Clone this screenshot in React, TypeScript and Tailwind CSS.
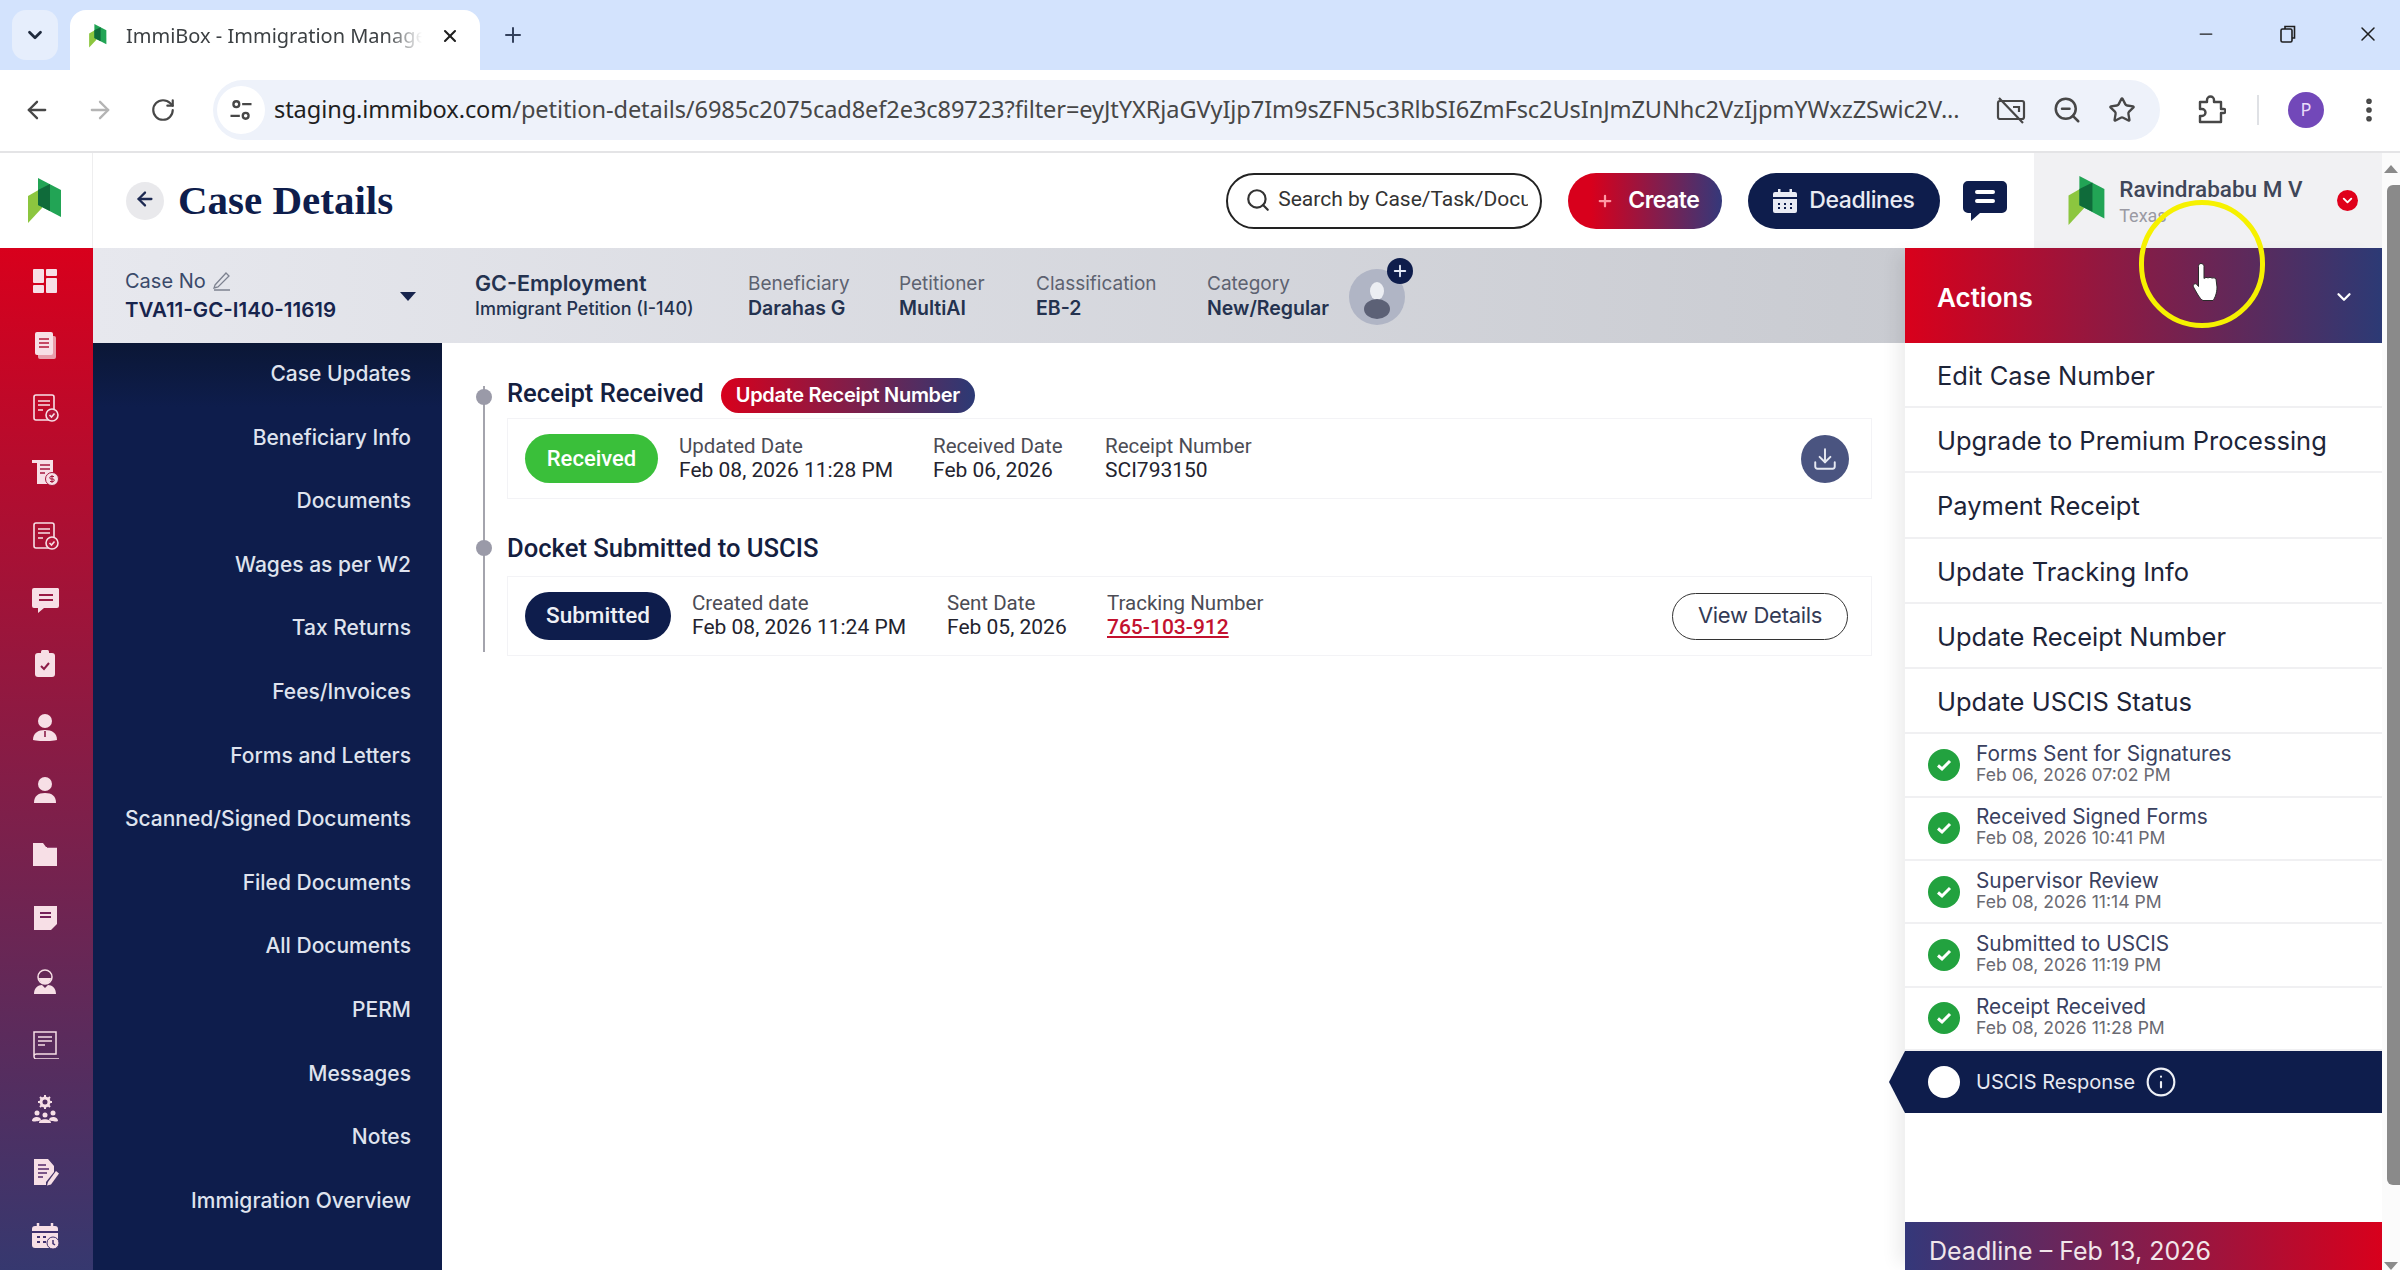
import { ArrowLeft, ArrowRight, ChevronDown, Download, Info, Minus, MoreVertical, Plus, RotateCw, Search, Star, X, ZoomOut } from 'lucide-react';

const navItems = [
    'Case Updates',
    'Beneficiary Info',
    'Documents',
    'Wages as per W2',
    'Tax Returns',
    'Fees/Invoices',
    'Forms and Letters',
    'Scanned/Signed Documents',
    'Filed Documents',
    'All Documents',
    'PERM',
    'Messages',
    'Notes',
    'Immigration Overview',
];

const actions = [
    'Edit Case Number',
    'Upgrade to Premium Processing',
    'Payment Receipt',
    'Update Tracking Info',
    'Update Receipt Number',
    'Update USCIS Status',
];

const steps = [
    { title: 'Forms Sent for Signatures', date: 'Feb 06, 2026 07:02 PM' },
    { title: 'Received Signed Forms', date: 'Feb 08, 2026 10:41 PM' },
    { title: 'Supervisor Review', date: 'Feb 08, 2026 11:14 PM' },
    { title: 'Submitted to USCIS', date: 'Feb 08, 2026 11:19 PM' },
    { title: 'Receipt Received', date: 'Feb 08, 2026 11:28 PM' },
];

function Logo({ className }: { className?: string }) {
    return (
        <svg viewBox="0 0 34 46" className={className}>
            <polygon points="0,18 14,10 14,30 0,45" fill="#8cc63f" />
            <polygon points="10,0 33,12 33,39 10,27" fill="#22a455" />
            <polygon points="10,12 22,6 22,33 10,27" fill="#0f6b3a" />
        </svg>
    );
}

const check = <><circle cx="21" cy="21" r="6" fill="#b5173a" stroke="currentColor" strokeWidth="1.6" /><path d="M18.5 21l2 2 3-3.5" fill="none" stroke="currentColor" strokeWidth="1.6" /></>;

const sideIcons = [
    <><rect x="2" y="2" width="11" height="14" rx="1" /><rect x="15" y="2" width="11" height="7" rx="1" /><rect x="2" y="18" width="11" height="8" rx="1" /><rect x="15" y="11" width="11" height="15" rx="1" /></>,
    <><rect x="7" y="5" width="18" height="23" rx="2" opacity=".7" /><rect x="4" y="1" width="18" height="23" rx="2" /><path d="M8 8h10M8 12h10M8 16h10" stroke="#b5173a" strokeWidth="1.6" /></>,
    <><rect x="3" y="1" width="20" height="25" rx="2" fill="none" stroke="currentColor" strokeWidth="1.6" /><path d="M7 7h12M7 11h12M7 16h5" stroke="currentColor" strokeWidth="1.6" />{check}</>,
    <><path d="M1 2h21v14l-2 10H6V5H1z" /><path d="M9 7h10M9 11h10M9 15h5" stroke="#a5183f" strokeWidth="1.6" /><circle cx="21" cy="21" r="6.5" stroke="#a5183f" strokeWidth="1" /><path d="M21 17v8M23 18.5h-3a1.2 1.2 0 000 2.5h2a1.2 1.2 0 010 2.500h-3" fill="none" stroke="#a5183f" strokeWidth="1" /></>,
    <><rect x="3" y="1" width="20" height="25" rx="2" fill="none" stroke="currentColor" strokeWidth="1.6" /><path d="M7 7h12M7 11h12M7 16h5" stroke="currentColor" strokeWidth="1.6" />{check}</>,
    <><path d="M3 3h24a2 2 0 011 1v17a2 2 0 01-2 2H13l-6 5v-5H3a2 2 0 01-2-2V5a2 2 0 012-2z" /><path d="M8 10h14M8 15h14" stroke="#9a1a44" strokeWidth="2" /></>,
    <><rect x="4" y="4" width="20" height="24" rx="3" /><rect x="10" y="1" width="8" height="5" rx="1.500" /><path d="M10 17l3 3 5-6" fill="none" stroke="#8c1c48" strokeWidth="2" /></>,
    <><circle cx="14" cy="8" r="7" /><path d="M2 27c0-7 5-10 12-10s12 3 12 10c-4 1.500-20 1.500-24 0z" /><path d="M14 18v6" stroke="#8a1d49" strokeWidth="1.600" /></>,
    <><circle cx="14" cy="8" r="7" /><path d="M3 27c0-7 4-10 11-10s11 3 11 10z" /></>,
    <><path d="M2 3h10l3 4h11v19H2z" /><path d="M16 7h10" stroke="#7e2052" strokeWidth="1.500" /></>,
    <><path d="M3 2h23v18l-6 6H3z" /><path d="M9 9h11M9 13h11" stroke="#75215a" strokeWidth="2" /></>,
    <><circle cx="14" cy="10" r="7" fill="none" stroke="currentColor" strokeWidth="1.500" /><path d="M8 11a6 6 0 0012 0z" /><path d="M3 27c0-6 4-9 8-9l3 3 3-3c4 0 8 3 8 9z" /></>,
    <><path d="M3 25V1h22v22H6a2.500 2.500 0 00-3 2.500 2.500 2.500 0 003 2.500h22" fill="none" stroke="currentColor" strokeWidth="1.500" /><path d="M7 6h14M7 10h14M7 14h7" stroke="currentColor" strokeWidth="1.500" /></>,
    <><circle cx="14" cy="7" r="4" fill="none" stroke="currentColor" strokeWidth="3" /><path d="M14 0v3M14 11v3M7 7h3M18 7h3M9 2l2 2M19 2l-2 2M9 12l2-2M19 12l-2-2" stroke="currentColor" strokeWidth="2" /><circle cx="6" cy="18" r="2.500" /><circle cx="22" cy="18" r="2.500" /><circle cx="14" cy="20" r="2.500" /><path d="M1 26c0-5 9-5 9-1-.5 1-8 2-9 1zM18 25c0-4 9-4 9 1-1 1-8 0-9-1zM8 28c0-5 12-5 12 0z" /></>,
    <><path d="M3 1h14l6 7v6l-8 10v3H3z" /><path d="M7 7h8M7 11h11M7 15h9M7 19h5" stroke="#54296a" strokeWidth="1.500" /><path d="M17 24l8-11 3 2.500-8 11-4 1z" /></>,
    <><rect x="1" y="4" width="26" height="22" rx="3" /><path d="M7 1v5M21 1v5" stroke="currentColor" strokeWidth="2.500" /><path d="M1 10h26M6 15h3M12 15h3M6 20h3M12 20h3" stroke="#41316f" strokeWidth="1.800" /><circle cx="22" cy="21" r="6" stroke="#41316f" strokeWidth="1" /><path d="M22 18v3.500l2 1.500" fill="none" stroke="#41316f" strokeWidth="1.500" /></>,
];

function TabStrip() {
    return (
        <div className="flex h-[70px] shrink-0 items-end bg-[#d3e3fd] font-['Noto_Sans',sans-serif]">
            <div className="mb-[10px] ml-[12px] flex h-[50px] w-[46px] items-center justify-center rounded-[14px] bg-[#e6eefc]">
                <ChevronDown size={22} strokeWidth={3} className="text-[#1f2a3d]" />
            </div>
            <div className="ml-[12px] flex h-[60px] w-[410px] items-center rounded-t-[16px] bg-white pb-[8px] pl-[18px]">
                <Logo className="h-[24px] w-[20px] shrink-0" />
                <span className="ml-[18px] w-[296px] overflow-hidden whitespace-nowrap text-[20px] text-[#3c4043] [mask-image:linear-gradient(90deg,#000_88%,transparent)]">ImmiBox - Immigration Manage</span>
                <X size={20} strokeWidth={2.5} className="ml-[18px] text-[#1f1f1f]" />
            </div>
            <Plus size={24} strokeWidth={2} className="mb-[23px] ml-[21px] text-[#33415c]" />
            <div className="mb-[24px] ml-auto flex items-center text-[#1f1f1f]">
                <Minus size={20} strokeWidth={1.5} />
                <svg viewBox="0 0 20 20" className="ml-[62px] h-[20px] w-[20px]" fill="none" stroke="currentColor" strokeWidth="1.6">
                    <rect x="3" y="5" width="11" height="13" rx="1.500" />
                    <path d="M7 5V2.500h9.500V14H14" />
                </svg>
                <X size={24} strokeWidth={1.5} className="ml-[58px] mr-[20px]" />
            </div>
        </div>
    );
}

function Toolbar() {
    return (
        <div className="flex h-[83px] shrink-0 items-center border-b-2 border-[#e4e4e6] bg-white pb-[2px] font-['Noto_Sans',sans-serif]">
            <ArrowLeft size={28} strokeWidth={2} className="ml-[23px] text-[#474747]" />
            <ArrowRight size={28} strokeWidth={2} className="ml-[35px] text-[#b4b4b4]" />
            <RotateCw size={26} strokeWidth={2} className="ml-[36px] text-[#474747]" />
            <div className="ml-[37px] flex h-[60px] w-[1947px] items-center rounded-full bg-[#eef2fa]">
                <div className="ml-[4px] flex h-[48px] w-[48px] shrink-0 items-center justify-center rounded-full bg-white">
                    <svg viewBox="0 0 24 24" className="h-[28px] w-[28px]" fill="none" stroke="#474747" strokeWidth="2">
                        <circle cx="8" cy="7" r="2.500" />
                        <path d="M13 7h8M3 17h8" />
                        <circle cx="16" cy="17" r="2.500" />
                    </svg>
                </div>
                <span className="ml-[9px] w-[1688px] overflow-hidden whitespace-nowrap text-[23.600px] tracking-[-0.1px] text-[#474747]">
                    <span className="text-[#1f1f1f]">staging.immibox.com</span>/petition-details/6985c2075cad8ef2e3c89723?filter=eyJtYXRjaGVyIjp7Im9sZFN5c3RlbSI6ZmFsc2UsInJmZUNhc2VzIjpmYWxzZSwic2V...
                </span>
                <svg viewBox="0 0 30 30" className="ml-[34px] h-[30px] w-[30px] shrink-0" fill="none" stroke="#474747" strokeWidth="2.200">
                    <rect x="2" y="6" width="26" height="18" rx="2" />
                    <path d="M3 3l24 25M17 12h6v5" />
                </svg>
                <ZoomOut size={30} strokeWidth={2} className="ml-[26px] shrink-0 text-[#474747]" />
                <Star size={28} strokeWidth={2} className="ml-[26px] shrink-0 text-[#474747]" />
            </div>
            <svg viewBox="0 0 30 30" className="ml-[36px] h-[30px] w-[30px]" fill="none" stroke="#474747" strokeWidth="2.400" strokeLinejoin="round">
                <path d="M4 7h7V5a3.500 3.500 0 017 0v2h7v7h2.500a1.500 1.500 0 010 4H25v9H4v-6h2a3.500 3.500 0 000-7H4z" />
            </svg>
            <div className="ml-[31px] h-[30px] w-[2px] bg-[#dfe1e5]" />
            <div className="ml-[29px] flex h-[36px] w-[36px] items-center justify-center rounded-full bg-[#7248b9] text-[18px] text-[#e8dcfa]">P</div>
            <MoreVertical size={30} strokeWidth={2.5} className="ml-[30px] text-[#474747]" />
        </div>
    );
}

function AppHeader() {
    return (
        <div className="flex h-[95px] shrink-0 items-center pl-[33px]">
            <div className="flex h-[38px] w-[38px] items-center justify-center rounded-full bg-[#e9e9ec] pb-[3px]">
                <ArrowLeft size={22} strokeWidth={2.5} className="text-[#1d2a52]" />
            </div>
            <h1 className="ml-[14px] whitespace-nowrap pt-[1px] font-['Liberation_Serif',serif] text-[41px] font-bold text-[#0e1d4c]">Case Details</h1>
            <div className="ml-[833px] flex h-[56px] w-[316px] shrink-0 items-center rounded-full border-2 border-[#222] pl-[17px] pb-[2px]">
                <Search size={26} strokeWidth={2} className="shrink-0 text-[#333]" />
                <span className="ml-[7px] w-[250px] overflow-hidden whitespace-nowrap font-['Roboto',sans-serif] text-[21px] text-[#333]">Search by Case/Task/Document</span>
            </div>
            <div className="ml-[26px] flex h-[56px] w-[154px] shrink-0 items-center rounded-full bg-[linear-gradient(90deg,#d8001c_15%,#34387a)] pl-[28px] text-white">
                <Plus size={18} strokeWidth={3} className="text-[#ff9aa5]" />
                <span className="ml-[14px] font-['Inter',sans-serif] text-[23px] font-semibold tracking-[-0.5px]">Create</span>
            </div>
            <div className="ml-[26px] flex h-[56px] w-[192px] shrink-0 items-center rounded-full bg-[#0e1d4c] pl-[24px] text-[#e9ebf3]">
                <svg viewBox="0 0 26 26" className="h-[26px] w-[26px] shrink-0" fill="currentColor">
                    <path d="M6 1h2.500v3h9V1H20v3h3a2 2 0 012 2v3H1V6a2 2 0 012-2h3z" />
                    <path d="M1 11h24v12a2 2 0 01-2 2H3a2 2 0 01-2-2z" />
                    <path d="M6 15h2v2H6zM12 15h2v2h-2zM18 15h2v2h-2zM6 19h2v2H6zM12 19h2v2h-2zM18 19h2v2h-2z" fill="#0e1d4c" />
                </svg>
                <span className="ml-[11px] font-['Inter',sans-serif] text-[23px] font-medium tracking-[-0.4px]">Deadlines</span>
            </div>
            <svg viewBox="0 0 44 40" className="ml-[23px] h-[40px] w-[44px] shrink-0">
                <path d="M5 0h34a5 5 0 015 5v22a5 5 0 01-5 5H17l-9 8v-8H5a5 5 0 01-5-5V5a5 5 0 015-5z" fill="#0e1d4c" />
                <path d="M14 11h16M14 20h16" stroke="#fff" strokeWidth="4" strokeLinecap="round" />
            </svg>
            <div className="ml-[27px] flex h-full flex-1 items-center bg-[#f1f1f3] pl-[33px]">
                <Logo className="h-[50px] w-[40px] shrink-0" />
                <div className="ml-[12px] flex flex-col pt-[2px] font-['Roboto',sans-serif]">
                    <span className="whitespace-nowrap text-[22.500px] font-medium leading-[26px] text-[#3f4658]">Ravindrababu M V</span>
                    <span className="mt-[3px] text-[18px] leading-[22px] text-[#9a9aa3]">Texas</span>
                </div>
                <div className="ml-[35px] flex h-[21px] w-[21px] shrink-0 items-center justify-center rounded-full bg-[#e0001b]">
                    <ChevronDown size={15} strokeWidth={3} className="text-white" />
                </div>
            </div>
        </div>
    );
}

function CaseBar() {
    return (
        <div className="flex h-[95px] shrink-0 items-center bg-[linear-gradient(90deg,#e7e8ee,#c9cbd1)] font-['Inter',sans-serif]">
            <div className="ml-[32px] flex w-[325px] shrink-0 items-center">
                <div className="w-[275px]">
                    <div className="flex items-center gap-[6px] text-[20px] leading-[28px] text-[#3a4a6a]">
                        Case No
                        <svg viewBox="0 0 20 20" className="h-[20px] w-[20px]" fill="none" stroke="#7d8290" strokeWidth="1.300">
                            <path d="M3 14L14 2l3 3L6 16l-4 1zM2 19h16" />
                        </svg>
                    </div>
                    <div className="whitespace-nowrap text-[20.500px] font-semibold leading-[30px] text-[#17244d]">TVA11-GC-I140-11619</div>
                </div>
                <div className="mt-[1px] h-0 w-0 border-x-[8px] border-t-[9px] border-x-transparent border-t-[#17244d]" />
            </div>
            <div className="ml-[25px] w-[273px] shrink-0">
                <div className="text-[21.500px] font-semibold leading-[26px] text-[#24324f]">GC-Employment</div>
                <div className="whitespace-nowrap text-[18px] font-medium leading-[26px] text-[#24324f]">Immigrant Petition (I-140)</div>
            </div>
            <CaseField label="Beneficiary" value="Darahas G" className="w-[151px]" />
            <CaseField label="Petitioner" value="MultiAI" className="w-[137px]" />
            <CaseField label="Classification" value="EB-2" className="w-[171px]" />
            <CaseField label="Category" value="New/Regular" className="w-[142px]" />
            <div className="relative mt-[3px] flex h-[56px] w-[56px] shrink-0 items-center justify-center overflow-visible rounded-full bg-[#b0b5c5]">
                <svg viewBox="0 0 56 56" className="h-[56px] w-[56px]">
                    <ellipse cx="28" cy="22" rx="7" ry="9" fill="#eceef3" />
                    <ellipse cx="28" cy="40" rx="13" ry="10" fill="#5c6176" />
                </svg>
                <div className="absolute -right-[8px] -top-[11px] flex h-[26px] w-[26px] items-center justify-center rounded-full bg-[#0e1d4c]">
                    <Plus size={18} strokeWidth={2.5} className="text-[#e2e8f5]" />
                </div>
            </div>
        </div>
    );
}

function CaseField({ label, value, className }: { label: string; value: string; className: string }) {
    return (
        <div className={`shrink-0 ${className}`}>
            <div className="text-[19px] leading-[24px] text-[#5d6270]">{label}</div>
            <div className="whitespace-nowrap text-[19.500px] font-semibold leading-[24px] text-[#24324f]">{value}</div>
        </div>
    );
}

function CaseNav() {
    return (
        <div className="flex w-[349px] shrink-0 flex-col bg-[#0e1d4c] font-['Inter',sans-serif]">
            {navItems.map((item, i) => (
                <div
                    key={item}
                    className={`flex h-[63.6px] shrink-0 items-center justify-end pb-[2px] pr-[31px] text-[21px] font-medium text-[#dfe3ee] ${i === 0 ? 'bg-[linear-gradient(180deg,#0b1736,#0e1d4c)]' : ''}`}
                >
                    {item}
                </div>
            ))}
        </div>
    );
}

function Meta({ label, value, className, link }: { label: string; value: string; className: string; link?: boolean }) {
    return (
        <div className={`-mt-[2px] shrink-0 font-['Roboto',sans-serif] ${className}`}>
            <div className="whitespace-nowrap text-[20.500px] leading-[24px] text-[#4c4c55]">{label}</div>
            <div className={`whitespace-nowrap text-[21px] leading-[24px] ${link ? 'font-medium text-[#c3112f] underline' : 'text-[#23232e]'}`}>{value}</div>
        </div>
    );
}

function Timeline() {
    return (
        <div className="relative min-w-0 flex-1 pl-[65px] pr-[33px] pt-[32px] font-['Roboto',sans-serif]">
            <div className="absolute left-[41px] top-[43px] h-[266px] w-[2px] bg-[#a4a4ad]" />
            <div className="absolute left-[34px] top-[46px] h-[16px] w-[16px] rounded-full bg-[#9a9aa8]" />
            <div className="absolute left-[34px] top-[197px] h-[16px] w-[16px] rounded-full bg-[#9a9aa8]" />

            <div className="flex h-[43px] items-center pb-[3px]">
                <span className="-mt-[4px] text-[25.600px] font-medium text-[#14203f]">Receipt Received</span>
                <span className="ml-[17px] flex h-[35px] items-center rounded-full bg-[linear-gradient(90deg,#d8001c,#2c3a75)] px-[15px] font-['Inter',sans-serif] text-[20px] font-semibold tracking-[-0.3px] text-white">Update Receipt Number</span>
            </div>
            <div className="flex h-[81px] items-center border border-[#f3f3f6] pl-[17px]">
                <span className="flex h-[49px] w-[133px] items-center justify-center rounded-full bg-[#3abf3a] text-[22px] font-medium text-white">Received</span>
                <Meta label="Updated Date" value="Feb 08, 2026 11:28 PM" className="ml-[21px] w-[254px]" />
                <Meta label="Received Date" value="Feb 06, 2026" className="w-[172px]" />
                <Meta label="Receipt Number" value="SCI793150" className="w-[200px]" />
                <div className="ml-auto mr-[22px] flex h-[48px] w-[48px] items-center justify-center rounded-full bg-[#4a5480]">
                    <Download size={26} strokeWidth={1.8} className="text-[#e6e9f2]" />
                </div>
            </div>

            <div className="mt-[29px] flex h-[48px] items-center pb-[7px]">
                <span className="text-[25.600px] font-medium text-[#14203f]">Docket Submitted to USCIS</span>
            </div>
            <div className="flex h-[80px] items-center border border-[#f3f3f6] pl-[17px]">
                <span className="flex h-[48px] w-[146px] items-center justify-center rounded-full bg-[#0e1d4c] text-[22.500px] font-medium text-[#eef0f6]">Submitted</span>
                <Meta label="Created date" value="Feb 08, 2026 11:24 PM" className="ml-[21px] w-[255px]" />
                <Meta label="Sent Date" value="Feb 05, 2026" className="w-[160px]" />
                <Meta label="Tracking Number" value="765-103-912" className="w-[200px]" link />
                <div className="ml-auto mr-[23px] flex h-[47px] w-[176px] items-center justify-center rounded-full border-[1.500px] border-[#333] pb-[1px] font-['Inter',sans-serif] text-[22px] tracking-[-0.3px] text-[#333a55]">View Details</div>
            </div>
        </div>
    );
}

function ActionsPanel() {
    return (
        <div className="flex w-[477px] shrink-0 flex-col bg-white shadow-[-14px_0_16px_-6px_rgba(0,0,0,0.07)] font-['Inter',sans-serif]">
            <div className="flex h-[95px] shrink-0 items-center bg-[linear-gradient(90deg,#d9001b,#2c3a75)] pl-[32px] pr-[27px] pt-[3px] text-white">
                <span className="text-[26px] font-semibold">Actions</span>
                <ChevronDown size={22} strokeWidth={2.5} className="ml-auto" />
            </div>
            {actions.map((a) => (
                <div key={a} className="flex h-[65.200px] shrink-0 items-center border-b-2 border-[#f0f0f2] pl-[32px] pt-[3px] text-[25.500px] text-[#1d2438]">{a}</div>
            ))}
            {steps.map((s) => (
                <div key={s.title} className="flex h-[63.400px] shrink-0 items-center border-b-2 border-[#f0f0f2] pl-[23px]">
                    <div className="flex h-[32px] w-[32px] items-center justify-center rounded-full bg-[#22a23f]">
                        <svg viewBox="0 0 20 20" className="h-[20px] w-[20px]" fill="none" stroke="#fff" strokeWidth="3">
                            <path d="M4 10.500l4 3.500 8-8" />
                        </svg>
                    </div>
                    <div className="ml-[16px] -mt-[2px]">
                        <div className="text-[20.800px] leading-[22px] text-[#3a4160]">{s.title}</div>
                        <div className="text-[17.600px] leading-[20px] text-[#6a6a72]">{s.date}</div>
                    </div>
                </div>
            ))}
            <div className="relative flex h-[62px] shrink-0 items-center bg-[#0e1d4c] pl-[23px] text-[#e6e9f2]">
                <div className="absolute -left-[16px] top-0 h-full w-[16px] bg-[#0e1d4c] [clip-path:polygon(100%_0,0_50%,100%_100%)]" />
                <div className="h-[32px] w-[32px] rounded-full bg-white" />
                <span className="ml-[16px] text-[20px]">USCIS Response</span>
                <Info size={32} strokeWidth={1.6} className="ml-[10px] text-[#eef0f6]" />
            </div>
            <div className="mt-auto flex h-[48px] shrink-0 items-start bg-[linear-gradient(90deg,#34387a,#d8001c)] pl-[24px] pt-[14px] text-[25px] leading-[30px] text-[#f1e6ea]">
                Deadline – Feb 13, 2026
            </div>
        </div>
    );
}

function Scrollbar() {
    return (
        <div className="flex w-[18px] shrink-0 flex-col items-end bg-[#fbfbfb]">
            <div className="mr-[2px] mt-[12px] h-0 w-0 border-x-[7px] border-b-[8px] border-x-transparent border-b-[#8a8a8a]" />
            <div className="mt-[12px] h-[1001px] w-[13px] rounded-l-[6px] bg-[#8a8a8a]" />
            <div className="mr-[2px] mt-[77px] h-0 w-0 border-x-[7px] border-t-[8px] border-x-transparent border-t-[#8a8a8a]" />
        </div>
    );
}

export default function App() {
    return (
        <div className="relative flex h-[1270px] w-[2400px] flex-col overflow-hidden bg-white">
            <TabStrip />
            <Toolbar />
            <div className="flex min-h-0 flex-1">
                {/* Icon rail */}
                <div className="flex w-[93px] shrink-0 flex-col">
                    <div className="flex h-[95px] shrink-0 items-center justify-center border-r border-[#eeeeef] pr-[2px]">
                        <Logo className="h-[46px] w-[34px]" />
                    </div>
                    <div className="flex flex-1 flex-col items-center bg-[linear-gradient(180deg,#d8001c,#36386f)] pt-[1px]">
                        {sideIcons.map((icon, i) => (
                            <div key={i} className="flex h-[63.700px] w-full shrink-0 items-center justify-center pr-[4px] text-[#f7dfe6]">
                                <svg viewBox="0 0 28 28" className="h-[28px] w-[28px]" fill="currentColor">
                                    {icon}
                                </svg>
                            </div>
                        ))}
                    </div>
                </div>

                <div className="flex min-w-0 flex-1 flex-col">
                    <AppHeader />
                    <div className="flex min-h-0 flex-1">
                        <div className="flex min-w-0 flex-1 flex-col">
                            <CaseBar />
                            <div className="flex min-h-0 flex-1">
                                <CaseNav />
                                <Timeline />
                            </div>
                        </div>
                        <ActionsPanel />
                    </div>
                </div>
                <Scrollbar />
            </div>

            {/* screen recording cursor highlight */}
            <div className="absolute left-[2139px] top-[200px] h-[128px] w-[126px] rounded-full border-[5px] border-[#f6f100]" />
            <svg viewBox="0 0 30 40" className="absolute left-[2192px] top-[262px] h-[40px] w-[30px]" fill="#fff" stroke="#2a2a2a" strokeWidth="1">
                <path d="M9 1.500c1.500 0 3 1 3 3v12c1-1 3-1.500 4-.5 1-.8 3-1 4 .2 1-.6 3-.6 4 .8l1 8c0 6-2 11-4 13.500H11c-3-1-7-9-9.500-13.500-1-2 1-4 3-3l2 2.500V4.500c0-2 1-3 2.500-3z" />
            </svg>
        </div>
    );
}
